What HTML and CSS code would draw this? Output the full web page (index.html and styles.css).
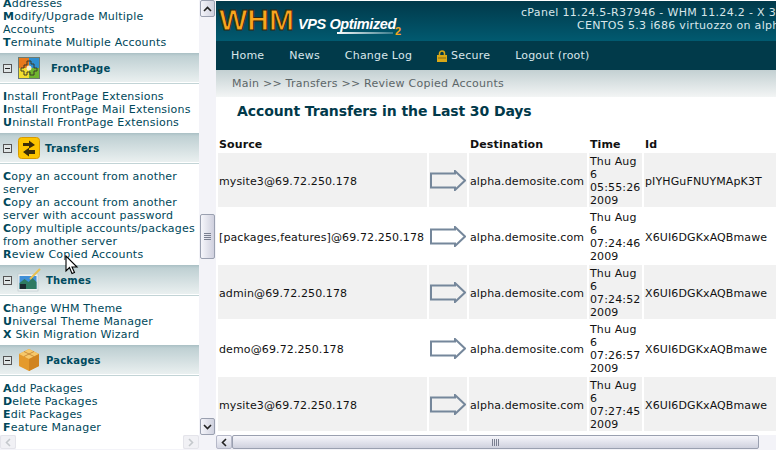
FILE: index.html
```html
<!DOCTYPE html>
<html lang="en">
<head>
<meta charset="utf-8">
<title>WHM - Review Copied Accounts</title>
<link rel="stylesheet" href="styles.css">
</head>
<body>
<div class="app">
  <aside class="left">
    <div class="left-main">
      <div class="menu">
        <ul class="links first">
          <li><b>A</b>ddresses</li>
          <li><b>M</b>odify/Upgrade Multiple<br>Accounts</li>
          <li><b>T</b>erminate Multiple Accounts</li>
        </ul>
        <div class="sec">
          <span class="minus"></span>
          <svg class="ic ic-fp" viewBox="0 0 22 22"><rect x="0" y="0" width="22" height="22" fill="#6a7a70"/><rect x="1" y="1" width="10" height="10" fill="#e8791c"/><rect x="11" y="1" width="10" height="10" fill="#2f8fd0"/><rect x="1" y="11" width="10" height="10" fill="#f2de2e"/><rect x="11" y="11" width="10" height="10" fill="#6fb52e"/><path d="M9 4h4v3h3v4h3v3h-3v4h-4v-3H9v3H6v-4H3v-3h3V8h3z" fill="none" stroke="#3c3a28" stroke-width="1"/><circle cx="11" cy="11" r="2.500" fill="#f4f0d0"/></svg>
          <span class="sec-t">FrontPage</span>
        </div>
        <ul class="links">
          <li><b>I</b>nstall FrontPage Extensions</li>
          <li><b>I</b>nstall FrontPage Mail Extensions</li>
          <li><b>U</b>ninstall FrontPage Extensions</li>
        </ul>
        <div class="sec">
          <span class="minus"></span>
          <svg class="ic ic-tr" viewBox="0 0 22 22"><rect x="0.500" y="0.500" width="21" height="21" rx="3" fill="#fcc400" stroke="#d89a00"/><path d="M5 6h6V3.500L17 8l-6 3.500V9H5z" fill="#3a2c08"/><path d="M17 13h-6v-2.200L5 15l6 4.500V17h6z" fill="#3a2c08"/></svg>
          <span class="sec-t">Transfers</span>
        </div>
        <ul class="links">
          <li><b>C</b>opy an account from another server</li>
          <li><b>C</b>opy an account from another server with account password</li>
          <li><b>C</b>opy multiple accounts/packages from another server</li>
          <li><b>R</b>eview Copied Accounts</li>
        </ul>
        <div class="sec">
          <span class="minus"></span>
          <svg class="ic ic-th" viewBox="0 0 24 24"><rect x="1" y="6" width="20" height="17" fill="#eef2f2" stroke="#b8c4c8" stroke-width="0.600"/><rect x="2.500" y="8" width="17" height="13" fill="#3f8fd8"/><path d="M2.500 15l5-4 4 3 4-4 4 4v7h-17z" fill="#2f7a62"/><rect x="3" y="16" width="6" height="5" fill="#1c2a30"/><path d="M13 11L23 1" stroke="#e8c050" stroke-width="2"/></svg>
          <span class="sec-t">Themes</span>
        </div>
        <ul class="links">
          <li><b>C</b>hange WHM Theme</li>
          <li><b>U</b>niversal Theme Manager</li>
          <li><b>X</b> Skin Migration Wizard</li>
        </ul>
        <div class="sec">
          <span class="minus"></span>
          <svg class="ic ic-pk" viewBox="0 0 24 24"><path d="M12 1l10 5v12l-10 5-10-5V6z" fill="#e49a2c"/><path d="M2 6l10 5 10-5-10-5z" fill="#f6c86a"/><path d="M12 11v12l10-5V6z" fill="#d08420"/><path d="M7 3.500l10 5M17 3.500L7 8.500" stroke="#c08030" stroke-width="0.800"/></svg>
          <span class="sec-t">Packages</span>
        </div>
        <ul class="links">
          <li><b>A</b>dd Packages</li>
          <li><b>D</b>elete Packages</li>
          <li><b>E</b>dit Packages</li>
          <li><b>F</b>eature Manager</li>
        </ul>
      </div>
      <div class="vbar">
        <div class="sbtn"><svg viewBox="0 0 9 6" class="chev"><path d="M1 5l3.500-3.500L8 5" fill="none" stroke="#222" stroke-width="1.600"/></svg></div>
        <div class="vtrack"><div class="vthumb"><span class="grip"></span></div></div>
        <div class="sbtn"><svg viewBox="0 0 9 6" class="chev"><path d="M1 1l3.500 3.500L8 1" fill="none" stroke="#222" stroke-width="1.600"/></svg></div>
      </div>
    </div>
    <div class="hbar hbar-left">
      <div class="hbtn dis"><svg viewBox="0 0 6 9" class="chev-h"><path d="M5 1L1.500 4.500 5 8" fill="none" stroke="#c4c8cc" stroke-width="1.600"/></svg></div>
      <div class="htrack"></div>
      <div class="hbtn dis"><svg viewBox="0 0 6 9" class="chev-h"><path d="M1 1l3.500 3.500L1 8" fill="none" stroke="#c4c8cc" stroke-width="1.600"/></svg></div>
    </div>
  </aside>
  <main class="right">
    <header class="top">
      <div class="logo">
        <span class="whm">WHM</span>
        <span class="vps">VPS Optimized</span>
        <span class="swoosh"></span>
        <span class="two">2</span>
      </div>
      <div class="ver">
        <div>cPanel 11.24.5-R37946 - WHM 11.24.2 - X 3.9</div>
        <div class="ver2">CENTOS 5.3 i686 virtuozzo on alpha.demosite.com</div>
      </div>
    </header>
    <nav class="nav">
      <span>Home</span>
      <span>News</span>
      <span>Change Log</span>
      <span class="sec-link"><svg class="lock" viewBox="0 0 10 12"><path d="M2.500 6V3.500a2.500 2.500 0 0 1 5 0V6" fill="none" stroke="#d8a818" stroke-width="1.500"/><rect y="5" width="10" height="7" fill="#d8a818"/><rect x="1" y="7.500" width="8" height="1" fill="#8a6c10"/></svg>Secure</span>
      <span>Logout (root)</span>
    </nav>
    <div class="crumb">Main &gt;&gt; Transfers &gt;&gt; Review Copied Accounts</div>
    <h1 class="title">Account Transfers in the Last 30 Days</h1>
    <div class="tblwrap">
      <table class="tbl">
        <colgroup><col class="c1"><col class="c2"><col class="c3"><col class="c4"><col class="c5"></colgroup>
        <thead><tr><th>Source</th><th></th><th>Destination</th><th>Time</th><th>Id</th></tr></thead>
        <tbody>
          <tr class="odd"><td>mysite3@69.72.250.178</td><td class="ac"><svg class="arr" viewBox="0 0 36 21"><path d="M1 3.500h24V1l10 9.500L25 20v-2.500H1z" fill="none" stroke="#75879b" stroke-width="2"/></svg></td><td>alpha.demosite.com</td><td>Thu Aug 6 05:55:26 2009</td><td>pIYHGuFNUYMApK3T</td></tr>
          <tr><td>[packages,features]@69.72.250.178</td><td class="ac"><svg class="arr" viewBox="0 0 36 21"><path d="M1 3.500h24V1l10 9.500L25 20v-2.500H1z" fill="none" stroke="#75879b" stroke-width="2"/></svg></td><td>alpha.demosite.com</td><td>Thu Aug 6 07:24:46 2009</td><td>X6UI6DGKxAQBmawe</td></tr>
          <tr class="odd"><td>admin@69.72.250.178</td><td class="ac"><svg class="arr" viewBox="0 0 36 21"><path d="M1 3.500h24V1l10 9.500L25 20v-2.500H1z" fill="none" stroke="#75879b" stroke-width="2"/></svg></td><td>alpha.demosite.com</td><td>Thu Aug 6 07:24:52 2009</td><td>X6UI6DGKxAQBmawe</td></tr>
          <tr><td>demo@69.72.250.178</td><td class="ac"><svg class="arr" viewBox="0 0 36 21"><path d="M1 3.500h24V1l10 9.500L25 20v-2.500H1z" fill="none" stroke="#75879b" stroke-width="2"/></svg></td><td>alpha.demosite.com</td><td>Thu Aug 6 07:26:57 2009</td><td>X6UI6DGKxAQBmawe</td></tr>
          <tr class="odd"><td>mysite3@69.72.250.178</td><td class="ac"><svg class="arr" viewBox="0 0 36 21"><path d="M1 3.500h24V1l10 9.500L25 20v-2.500H1z" fill="none" stroke="#75879b" stroke-width="2"/></svg></td><td>alpha.demosite.com</td><td>Thu Aug 6 07:27:45 2009</td><td>X6UI6DGKxAQBmawe</td></tr>
        </tbody>
      </table>
    </div>
    <div class="hbar hbar-right">
      <div class="hbtn"><svg viewBox="0 0 6 9" class="chev-h"><path d="M5 1L1.500 4.500 5 8" fill="none" stroke="#222" stroke-width="1.600"/></svg></div>
      <div class="hthumb"><span class="grip-h"></span></div>
    </div>
  </main>
  <svg class="cursor" viewBox="0 0 14 20"><path d="M1 1v15l3.500-3.500L7 18.500l2.500-1-2.500-5.500h5z" fill="#fff" stroke="#000" stroke-width="1.100"/></svg>
</div>
</body>
</html>
```
FILE: styles.css
```css
* { box-sizing: border-box; }
html, body { margin: 0; padding: 0; background: #fff; }
body { font-family: "DejaVu Sans", Verdana, sans-serif; font-size: 11px; line-height: 13px; overflow: hidden; }
.app { position: relative; display: flex; width: 776px; height: 450px; overflow: hidden; }

/* left frame */
.left { width: 216px; height: 450px; display: flex; flex-direction: column; flex: none; background: #f3f3f8; }
.left-main { display: flex; height: 435px; flex: none; }
.menu { width: 199px; height: 435px; overflow: hidden; color: #00485a; background: #fff; flex: none; }
.links { list-style: none; margin: 0; padding: 6px 0 4px 3px; }
.links.first { margin-top: -9px; }
.links li { letter-spacing: 0.2px; }
.links b { font-weight: bold; }
.sec { height: 31px; display: flex; align-items: center; padding-left: 3px; border-bottom: 1px solid #c2d4d6; background: linear-gradient(#a9bfc4 0, #bfd0d3 3px, #eaf0f0 29px); box-shadow: inset 0 -1px 0 #fff; }
.minus { width: 9px; height: 9px; border: 1px solid #555; background: #dfe5e5; position: relative; flex: none; }
.minus::after { content: ""; position: absolute; left: 1px; top: 3px; width: 5px; height: 1px; background: #222; }
.ic { flex: none; }
.ic-fp { width: 22px; height: 22px; margin: 0 11px 0 6px; }
.ic-tr { width: 22px; height: 22px; margin: 0 5px 0 6px; }
.ic-th { width: 24px; height: 24px; margin: 0 5px 0 5px; }
.ic-pk { width: 24px; height: 24px; margin: 0 5px 0 5px; }
.sec-t { font-weight: bold; font-size: 10px; color: #004a5e; letter-spacing: 0.2px; }

/* scrollbars */
.vbar { width: 17px; height: 435px; display: flex; flex-direction: column; background: #f3f3f8; flex: none; }
.sbtn { height: 17px; width: 15px; margin-left: 1px; border: 1px solid #9aa0b0; border-radius: 2px; background: linear-gradient(90deg, #f4f4fa, #cfd1de); display: flex; align-items: center; justify-content: center; flex: none; }
.chev { width: 9px; height: 6px; }
.vtrack { flex: 1; padding-top: 197px; }
.vthumb { width: 15px; height: 45px; margin-left: 1px; border: 1px solid #9aa0b0; border-radius: 2px; background: linear-gradient(90deg, #f6f6fb, #cfd0de); display: flex; align-items: center; justify-content: center; }
.grip { width: 7px; height: 7px; background: repeating-linear-gradient(#7a7f90 0 1px, transparent 1px 2px); }
.hbar { height: 15px; display: flex; background: #f3f3f8; flex: none; }
.hbtn { width: 16px; height: 14px; border: 1px solid #b5b8c8; border-radius: 2px; background: linear-gradient(#f6f6fb, #d3d5e2); display: flex; align-items: center; justify-content: center; flex: none; }
.hbtn.dis { background: #f1f1f5; border-color: #e4e4ea; }
.chev-h { width: 6px; height: 9px; }
.htrack { flex: 1; background: #fff; height: 14px; }
.hbar-left { width: 199px; justify-content: space-between; }
.hthumb { flex: 1; height: 14px; border: 1px solid #9aa0b0; border-radius: 2px; background: linear-gradient(#f6f6fb, #cfd1de); display: flex; align-items: center; justify-content: center; margin-right: 17px; }
.grip-h { width: 7px; height: 7px; background: repeating-linear-gradient(90deg, #7a7f90 0 1px, transparent 1px 2px); }

/* right frame */
.right { width: 560px; height: 450px; display: flex; flex-direction: column; flex: none; overflow: hidden; }
.top { height: 40px; margin-top: 1px; display: flex; background: linear-gradient(#01394a, #015a70); color: #d8e6ea; flex: none; overflow: hidden; }
.logo { position: relative; width: 305px; flex: none; }
.whm { position: absolute; left: 3px; top: 4px; font: 900 30px/30px "Liberation Sans", sans-serif; color: #f9a51e; -webkit-text-stroke: 1px #33270f; }
.vps { position: absolute; left: 82px; top: 14px; font: italic bold 14.5px/18px "Liberation Sans", sans-serif; color: #fff; white-space: nowrap; letter-spacing: -0.4px; }
.swoosh { position: absolute; left: 121px; top: 31px; width: 56px; height: 2px; background: linear-gradient(90deg, #fff, #3a7c8c); }
.two { position: absolute; left: 179px; top: 25px; font: bold 11px/11px "Liberation Sans", sans-serif; color: #f9a51e; }
.ver { flex: none; white-space: nowrap; font-size: 11px; line-height: 13px; padding: 5px 0 0 0; width: 400px; letter-spacing: 0.32px; }
.ver2 { padding-left: 56px; }
.nav { height: 29px; display: flex; align-items: center; background: #013a4a; color: #d8e6ea; font-size: 11px; letter-spacing: 0.2px; padding-left: 15px; gap: 25px; flex: none; }
.sec-link { display: flex; align-items: center; gap: 4px; }
.lock { width: 10px; height: 12px; }
.crumb { height: 27px; display: flex; align-items: center; padding-left: 16px; background: linear-gradient(#c3d0d2, #f3f5f5); color: #5c6668; letter-spacing: 0.24px; flex: none; }
.title { margin: 0; height: 37px; padding: 7px 0 0 21px; font-size: 14px; line-height: 14px; font-weight: bold; color: #01394a; letter-spacing: -0.1px; flex: none; }
.tblwrap { flex: 1; overflow: hidden; }
.tbl { table-layout: fixed; width: 560px; border-spacing: 2px; border-collapse: separate; font-size: 11px; line-height: 13px; color: #111; letter-spacing: 0.12px; }
.tbl .c1 { width: 209px; }
.tbl .c2 { width: 38px; }
.tbl .c3 { width: 118px; }
.tbl .c4 { width: 53px; }
.tbl .c5 { width: 132px; }
.tbl th { text-align: left; padding: 2px 1px 0; font-weight: bold; }
.tbl td { padding: 2px 1px 0; white-space: normal; }
.tbl td.ac { padding: 1px; }
.tbl tbody tr { height: 54px; }
.odd td { background: #f1f1f1; }
.ac { line-height: 0; }
.arr { width: 36px; height: 21px; display: block; }

.cursor { position: absolute; left: 65px; top: 255px; width: 14px; height: 20px; }
```
